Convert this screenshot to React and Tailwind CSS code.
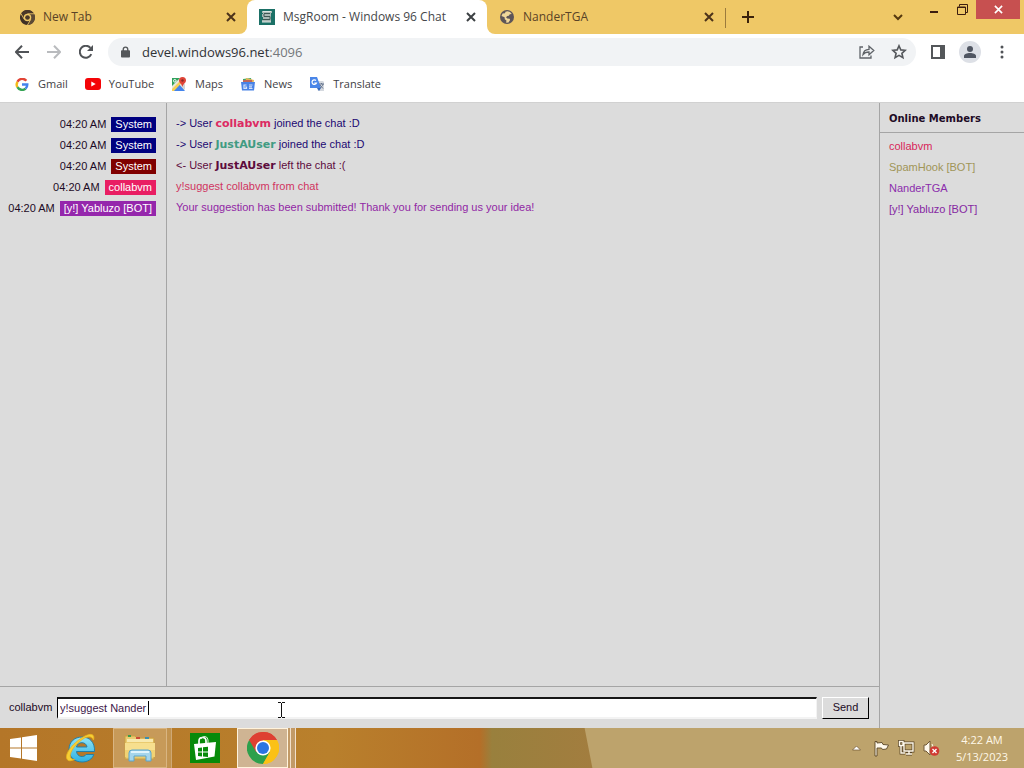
import React from "react";

const tabText = "text-[12px] leading-4";

function ChromeMark({ size, mono }) {
  const c = mono
    ? { r: "#4a3728", y: "#5d4a35", g: "#3f3026", b: "#4a3728", w: "#efc866" }
    : { r: "#de4032", y: "#fbc116", g: "#2da04c", b: "#2b74e2", w: "#ffffff" };
  return (
    <svg width={size} height={size} viewBox="0 0 32 32" aria-hidden="true">
      <path d="M16 16 2.14 8A16 16 0 0 1 29.86 8Z" fill={c.r} />
      <path d="M16 16V8H29.86A16 16 0 0 1 16 32Z" fill={c.y} />
      <path d="M2.14 8A16 16 0 0 0 16 32L22.9 20 16 16Z" fill={c.g} />
      <path d="M2.14 8 9.1 20 16 16 16 8 29.86 8A16 16 0 0 0 2.14 8Z" fill={c.r} />
      <path d="M29.86 8H16L22.9 20 16 32A16 16 0 0 0 29.86 8Z" fill={c.y} />
      {mono && (
        <g stroke={c.w} strokeWidth="1.8" fill="none">
          <path d="M16 8H31M9.1 20 1.6 7M22.9 20 15.4 33" />
        </g>
      )}
      <circle cx="16" cy="16" r={mono ? 8 : 7.6} fill={c.w} />
      <circle cx="16" cy="16" r={mono ? 5 : 6} fill={c.b} />
    </svg>
  );
}

function Cross({ color, size = 10, width = 2 }) {
  return (
    <svg width={size} height={size} viewBox="0 0 10 10" aria-hidden="true">
      <path d="M1 1 9 9M9 1 1 9" stroke={color} strokeWidth={width} />
    </svg>
  );
}

function MsgRoomIcon() {
  return (
    <svg width="16" height="16" viewBox="0 0 16 16" aria-hidden="true">
      <rect width="16" height="16" fill="#1b7066" />
      <path d="M3 2h10v2h-1v9H3v-2h1V8H3V5h1V4H3z" fill="#a9b8b4" />
      <path d="M5 4.500h6M5 5v2.500h6v3H4" stroke="#3f5753" fill="none" />
      <path d="M3 13h9M4 2.500h8" stroke="#dce5e2" />
    </svg>
  );
}

function GlobeIcon() {
  return (
    <svg width="16" height="16" viewBox="0 0 16 16" aria-hidden="true">
      <circle cx="8" cy="8" r="7" fill="#5d5558" />
      <path d="M8.500 2.200 11 3 12.800 5l-2 .2-1 1.600-1.500.2L7 8.300l1.300 1.200 2.300.3.500 1.300-1.600 2.400-2.300.3.200-2.200-1.600-1.300-.2-2L2.500 7.100 3.600 4.500 6 4.200l.5-1.400z" fill="#efd79a" />
    </svg>
  );
}

function Tab({ icon, title, active, width }) {
  return (
    <div
      role="tab"
      aria-selected={active}
      className={`flex h-[34px] min-w-0 items-center pl-3 pr-2 ${width} ${
        active ? "rounded-t-lg bg-white text-[#45474a]" : "text-[#5a4326]"
      }`}
    >
      {icon}
      <span className={`ml-2 flex-1 truncate ${tabText}`}>{title}</span>
      <button aria-label={`Close ${title}`} className="grid size-4 place-items-center">
        <Cross color={active ? "#3c4043" : "#4c331a"} />
      </button>
    </div>
  );
}

function TabStrip() {
  return (
    <header className="flex h-[34px] bg-[#efc866]">
      <div role="tablist" className="flex min-w-0">
        <div className="flex w-[247px] bg-white">
          <div className="flex w-full rounded-br-lg bg-[#efc866] pl-2">
            <Tab icon={<ChromeMark size={15} mono />} title="New Tab" width="w-full" />
          </div>
        </div>
        <div className="flex">
          <Tab icon={<MsgRoomIcon />} title="MsgRoom - Windows 96 Chat" active width="w-[240px]" />
        </div>
        <div className="w-[238px] bg-white">
          <div className="rounded-bl-lg bg-[#efc866]">
            <Tab icon={<GlobeIcon />} title="NanderTGA" width="w-full" />
          </div>
        </div>
      </div>
      <span className="mt-2 h-5 w-px bg-[#9b7b3d]" />
      <button aria-label="New tab" className="ml-4 mt-2 grid h-[18px] w-3 place-items-center">
        <svg width="12" height="12" viewBox="0 0 12 12"><path d="M6 0v12M0 6h12" stroke="#3b220b" strokeWidth="2" /></svg>
      </button>
      <span className="flex-1" />
      <div className="flex items-start">
        <button aria-label="Search tabs" className="mr-6 mt-2 grid h-[18px] w-3 place-items-center">
          <svg width="10" height="7" viewBox="0 0 10 7"><path d="m1 1 4 4 4-4" stroke="#55390f" strokeWidth="2" fill="none" /></svg>
        </button>
        <button aria-label="Minimize" className="mr-4 grid h-6 w-3 place-items-center">
          <svg width="8" height="2"><path d="M0 1h8" stroke="#3b1d10" strokeWidth="2" /></svg>
        </button>
        <button aria-label="Restore" className="mr-2 grid h-[18px] w-3 place-items-center">
          <svg width="11" height="11" viewBox="0 0 11 11" fill="none" stroke="#3b1d10">
            <path d="M2.500 2.500V.500h8v8h-2M.500 3h8v7.500h-8zM.500 3.500h8" />
          </svg>
        </button>
        <button aria-label="Close window" className="mr-1 grid h-[19px] w-[44px] place-items-center bg-[#c75050]">
          <Cross color="#fff" size={9} width={1.8} />
        </button>
      </div>
    </header>
  );
}

function Toolbar() {
  return (
    <div className="flex h-9 items-center bg-white pl-3 pr-3">
      <button aria-label="Back" className="grid size-5 place-items-center">
        <svg width="14" height="14" viewBox="0 0 14 14" fill="none" stroke="#505357" strokeWidth="2"><path d="M14 7H1.500M7 .8.900 7 7 13.200" /></svg>
      </button>
      <button aria-label="Forward" className="ml-3 grid size-5 place-items-center">
        <svg width="14" height="14" viewBox="0 0 14 14" fill="none" stroke="#b9bbbe" strokeWidth="2"><path d="M0 7h12.500M7 .8 13.100 7 7 13.200" /></svg>
      </button>
      <button aria-label="Reload" className="ml-3 grid size-5 place-items-center">
        <svg width="14" height="14" viewBox="0 0 14 14">
          <path d="M12.300 9.200A6 6 0 1 1 11.400 2.900" fill="none" stroke="#505357" strokeWidth="2" />
          <path d="M14 0v6H8z" fill="#505357" />
        </svg>
      </button>
      <div className="ml-3 flex h-7 flex-1 items-center rounded-full bg-[#f1f3f5] pl-[13px] pr-[7px]">
        <svg width="9" height="12" viewBox="0 0 10 12" aria-hidden="true">
          <rect y="4" width="10" height="8" rx="1" fill="#54575a" />
          <path d="M2.500 5V3a2.500 2.500 0 0 1 5 0v2" fill="none" stroke="#54575a" strokeWidth="1.500" />
        </svg>
        <span className="ml-3 flex-1 text-[13px] leading-5 text-[#303236]">
          devel.windows96.net<span className="text-[#74777b]">:4096</span>
        </span>
        <button aria-label="Share" className="grid size-5 place-items-center">
          <svg width="16" height="14" viewBox="0 0 16 14" fill="none" stroke="#5f6368" strokeWidth="1.300">
            <path d="M4 2H1v11h11v-2.500M4 9.500c.4-3.500 2.500-5 6-5.200V1.200L14.800 5.500 10 9.800V7C7.500 7 5.500 7.600 4 9.500Z" />
          </svg>
        </button>
        <button aria-label="Bookmark this tab" className="ml-3 grid size-5 place-items-center">
          <svg width="16" height="16" viewBox="0 0 16 16" fill="none" stroke="#55585c" strokeWidth="1.600">
            <path d="m8 1.800 1.800 4.100 4.400.4-3.300 3 1 4.400L8 11.400l-3.900 2.300 1-4.400-3.300-3 4.400-.4z" />
          </svg>
        </button>
      </div>
      <button aria-label="Side panel" className="ml-3 grid size-5 place-items-center">
        <svg width="14" height="14" viewBox="0 0 14 14"><rect x="1" y="1" width="12" height="12" fill="#fff" stroke="#54575a" strokeWidth="2" /><path d="M9 1h4v12H9z" fill="#54575a" /></svg>
      </button>
      <button aria-label="Profile" className="ml-[11px] grid size-[22px] place-items-center rounded-full bg-[#dde0e6]">
        <svg width="12" height="12" viewBox="0 0 12 12" fill="#505662"><circle cx="6" cy="3" r="3" /><path d="M0 12v-2c0-2 3-3 6-3s6 1 6 3v2z" /></svg>
      </button>
      <button aria-label="Menu" className="ml-[11px] grid size-5 place-items-center">
        <svg width="4" height="14" viewBox="0 0 4 14" fill="#505357"><circle cx="2" cy="2" r="1.500" /><circle cx="2" cy="7" r="1.500" /><circle cx="2" cy="12" r="1.500" /></svg>
      </button>
    </div>
  );
}

const bookmarkIcons = {
  Gmail: (
    <svg width="16" height="13" viewBox="0 0 16 16" aria-hidden="true">
      <g fill="none" strokeWidth="3">
        <path d="M13.300 3.500A6.500 6.500 0 0 0 2.400 4.700" stroke="#e24436" />
        <path d="M2.400 4.700a6.500 6.500 0 0 0 0 6.600" stroke="#f4bb18" />
        <path d="M2.400 11.300a6.500 6.500 0 0 0 10 1.700" stroke="#36a455" />
        <path d="M12.400 13a6.500 6.500 0 0 0 2.100-5H8" stroke="#4482ec" />
      </g>
    </svg>
  ),
  YouTube: (
    <svg width="16" height="12" viewBox="0 0 16 12" aria-hidden="true"><rect width="16" height="12" rx="3" fill="#f40407" /><path d="m6.300 3.500 4.400 2.500-4.400 2.500z" fill="#fff" /></svg>
  ),
  Maps: (
    <svg width="16" height="16" viewBox="0 0 16 16" aria-hidden="true">
      <path d="M1 2h12v12H1z" fill="#e8e6dc" />
      <path d="M1 2h8L1 10z" fill="#31a15c" /><path d="M2 15 8 8l6 7z" fill="#4384ec" />
      <path d="m1 13 9-9 1.500 2L3 15H1z" fill="#f6cf55" />
      <path d="m9 9 5-1v6z" fill="#d3d5d6" />
      <path d="M11.500 1A3.500 3.500 0 0 1 15 4.500C15 7 12 8 11.500 11 11 8 8 7 8 4.500A3.500 3.500 0 0 1 11.500 1z" fill="#df4438" /><circle cx="11.500" cy="4.500" r="1.200" fill="#872c27" />
      <circle cx="3.800" cy="4.800" r="1.300" fill="none" stroke="#fff" />
    </svg>
  ),
  News: (
    <svg width="16" height="16" viewBox="0 0 16 16" aria-hidden="true">
      <path d="m3 3 8-1 1 6H3z" fill="#40a763" /><path d="m6 2 8 2-1 5H5z" fill="#e3b454" /><path d="M3 4h9v5H3z" fill="#bd675c" />
      <path d="M1 6h14l-1 8.500H2z" fill="#4a83e6" />
      <path d="M6.500 9H4v3.500h2.500V11H5M9 9h3.500M9 10.800h3M9 12.500h3.500" fill="none" stroke="#d6e4fb" strokeWidth="1.200" />
    </svg>
  ),
  Translate: (
    <svg width="16" height="16" viewBox="0 0 16 16" aria-hidden="true">
      <path d="M6 5h8l1 1v9H9z" fill="#d5d9df" />
      <path d="M1 1h7l4 11H1z" fill="#4a86e8" /><path d="m8 12 4 0-2 3z" fill="#3568bd" />
      <path d="M7 4.500A2.300 2.300 0 1 0 7.500 7H5.300" fill="none" stroke="#fff" strokeWidth="1.200" />
      <path d="M10 8h5M12.500 7v1M14 8c-.3 2-1.500 3-3 4M11 9l3 3.500" stroke="#66758e" fill="none" />
    </svg>
  ),
};

function Bookmarks() {
  return (
    <nav className="flex h-8 items-center gap-[17px] bg-white px-[14px] pb-1 text-[11px] leading-4 text-[#3f4145]">
      {Object.keys(bookmarkIcons).map((name) => (
        <a key={name} href="#" className="flex items-center gap-2">{bookmarkIcons[name]}{name}</a>
      ))}
    </nav>
  );
}

const messages = [
  { who: "System", tag: "bg-[#000080]", text: "text-[#1b0872]", body: <>-&gt; User <b className="text-[#dc2a62]">collabvm</b> joined the chat :D</> },
  { who: "System", tag: "bg-[#000080]", text: "text-[#1b0872]", body: <>-&gt; User <b className="text-[#419b82]">JustAUser</b> joined the chat :D</> },
  { who: "System", tag: "bg-[#800000]", text: "text-[#5d0b3c]", body: <>&lt;- User <b>JustAUser</b> left the chat :(</> },
  { who: "collabvm", tag: "bg-[#e91e63]", text: "text-[#d03460]", body: "y!suggest collabvm from chat" },
  { who: "[y!] Yabluzo [BOT]", tag: "bg-[#9527ac]", text: "text-[#9127a5]", body: "Your suggestion has been submitted! Thank you for sending us your idea!" },
];

const members = [
  { name: "collabvm", color: "text-[#d82659]" },
  { name: "SpamHook [BOT]", color: "text-[#a09558]" },
  { name: "NanderTGA", color: "text-[#8b2dac]" },
  { name: "[y!] Yabluzo [BOT]", color: "text-[#8627a2]" },
];

function ChatRoom() {
  return (
    <main className="flex flex-1 border-t border-[#d1d1d1] bg-[#dcdcdc] font-['Liberation_Sans',Arial,sans-serif] text-[11px] leading-[15px] text-[#1d0b25]">
      <section className="flex min-w-0 flex-1 flex-col">
        <ol className="flex flex-1 flex-col">
          <li aria-hidden="true" className="h-[11px] w-[167px] border-r border-[#a5a5a5]" />
          {messages.map((m, i) => (
            <li key={i} className="flex h-[21px]">
              <div className="flex w-[167px] shrink-0 items-center justify-end gap-[5px] whitespace-nowrap border-r border-[#a5a5a5] pr-[10px]">
                <time>04:20 AM</time>
                <span className={`px-1 text-white ${m.tag}`}>{m.who}</span>
              </div>
              <p className={`flex-1 pl-[9px] pt-[2px] [&_b]:font-['DejaVu_Sans',sans-serif] ${m.text}`}>{m.body}</p>
            </li>
          ))}
          <li aria-hidden="true" className="w-[167px] flex-1 border-r border-[#a5a5a5]" />
        </ol>
        <form className="flex h-[42px] items-center border-t border-[#a5a5a5] pl-[9px] pr-[10px]" onSubmit={(e) => e.preventDefault()}>
          <label htmlFor="message" className="w-12 shrink-0">collabvm</label>
          <div className="relative flex-1">
            <input
              id="message"
              defaultValue="y!suggest Nander"
              className="block h-[22px] w-full border border-b-2 border-t-2 border-b-[#f3f3f3] border-l-black border-r-[#f3f3f3] border-t-[#161616] bg-white px-[2px] text-[#3c1548] outline-none"
            />
            <span className="absolute left-[91px] top-1 h-[14px] w-px bg-black" />
            <svg className="absolute left-[220px] top-[5px]" width="9" height="16" viewBox="0 0 9 16" fill="none" stroke="#111" aria-hidden="true">
              <path d="M1 .500h3M5 .500h3M4.500 1v14M1 15.500h3M5 15.500h3" />
            </svg>
          </div>
          <button className="ml-[5px] h-[22px] w-[47px] border border-b-black border-l-white border-r-black border-t-white bg-[#dcdcdc]">Send</button>
        </form>
      </section>
      <aside className="w-[145px] shrink-0 border-l border-[#a5a5a5]">
        <h2 className="h-[30px] border-b border-[#a5a5a5] pl-[9px] pt-2 font-['DejaVu_Sans',sans-serif] text-[10px] font-bold">Online Members</h2>
        <ul className="pl-[9px] pt-[3px]">
          {members.map((m) => (
            <li key={m.name} className={`flex h-[21px] items-center ${m.color}`}>{m.name}</li>
          ))}
        </ul>
      </aside>
    </main>
  );
}

function ExplorerWindowIcon() {
  return (
    <svg width="32" height="30" viewBox="0 0 32 30" aria-hidden="true">
      <path d="M1 3h10l2 2h17v21H1z" fill="#eacb70" stroke="#c99f42" />
      <path d="M3 6h26v3H3z" fill="#f8e9ae" /><path d="M1 10h30v14H1z" fill="#f7df8e" />
      <path d="M1 17h30v7H1z" fill="#f1d273" />
      <path d="M4 2h3v2H4z" fill="#3b9b4a" /><path d="M12 4h4v2h-4z" fill="#cc4b37" /><path d="M21 4h4v2h-4z" fill="#3c8eaf" />
      <path d="M5 28v-8q0-3 3-3h16q3 0 3 3v8h-5v-5H10v5z" fill="#a5d5ec" stroke="#5aa4cb" />
      <path d="M7 19h18" stroke="#e0f4fc" strokeWidth="2" />
    </svg>
  );
}

function Taskbar() {
  return (
    <footer className="flex h-10 items-stretch bg-[linear-gradient(79deg,transparent_581px,#bda36c_582px),linear-gradient(90deg,#b47628_0px,#b9802c_330px,#b46f28_480px,#99803d_492px,#a37d3f_600px)] text-[#fff8e8]">
      <button aria-label="Start" className="grid w-12 place-items-center">
        <svg width="28" height="26" viewBox="0 0 28 26" fill="#fff"><path d="M0 4 11 2.400V12.400H0zM12 2.200 27 0v12.400H12zM0 13.500h11v10L0 22zM12 13.500h15V26l-15-2.300z" /></svg>
      </button>
      <button aria-label="Internet Explorer" className="grid w-[65px] place-items-center">
        <svg width="31" height="32" viewBox="0 0 31 32">
          <defs><linearGradient id="ie" x2="0" y2="1"><stop stopColor="#8fe3f8" /><stop offset="1" stopColor="#2fb2e2" /></linearGradient></defs>
          <path d="M29.500 19.500H11.500c.5 5.500 7.500 6.500 9.500 3h7.800C27 27.500 22.500 30 17 30 9.500 30 4 25 4 17.500S9.500 5 17 5s13 5 12.500 14.500zM22 15c-.5-5.500-9.500-6-10.500 0z" fill="url(#ie)" stroke="#247fa6" />
          <path d="M28.500 8C30 3 27 .5 20 4 9 9.500-1 22 2 27c1 2.500 4 2 7.500.5C3 28 4 20 12 12 19 5 26 2 28.500 8Z" fill="#f7cf35" stroke="#e9b21d" strokeWidth=".8" />
        </svg>
      </button>
      <div className="flex w-[59px] border-r border-[#cfa875] bg-[#c2934f]">
        <button aria-label="File Explorer" className="grid flex-1 place-items-center border border-[#d9b582] bg-[#c79a59]"><ExplorerWindowIcon /></button>
        <span className="w-1" />
      </div>
      <button aria-label="Store" className="grid w-[65px] place-items-center">
        <svg width="30" height="30" viewBox="0 0 30 30">
          <path d="M0 0h30v30H0z" fill="#078a0a" />
          <path d="M9 11V8q0-3.500 3.500-3.500T16 8v2" fill="none" stroke="#fff" strokeWidth="1.700" /><path d="M11 6q1-3 4-2.500T18 7v3" stroke="#d9f0d6" fill="none" />
          <path d="m4 11 22-2-1.500 14.500L6 27z" fill="#fff" />
          <path d="m8 15 4-.5v4H8zM13 14.300l5-.6v4.800h-5zM8 19.500h4v4l-4-.6zM13 19.500h5V24l-5-.500z" fill="#078a0a" />
        </svg>
      </button>
      <div className="flex w-[59px] gap-px border-r border-[#f1dfcb] bg-[#c29a67]">
        <button aria-label="Google Chrome" className="grid flex-1 place-items-center border border-[#fff3dc] bg-[#cfb493]"><ChromeMark size={32} /></button>
        <span className="w-[2px] border-r border-[#f1dfcb]" />
        <span className="w-[3px]" />
      </div>
      <span className="flex-1" />
      <div className="flex items-center">
        <button aria-label="Show hidden icons"><svg width="9" height="6" viewBox="0 0 9 6"><path d="M.500 5 4.500 1l4 4z" fill="#fff" stroke="#6c512f" strokeWidth=".7" /></svg></button>
        <svg className="ml-3" width="17" height="17" viewBox="0 0 17 17" role="img" aria-label="Action Center">
          <path d="M2 1.500h2V3l5-.5 1 2 5.500.5-2 4-4 .5-1-1.500H4v8H2z" fill="#fff9ec" stroke="#594526" strokeWidth=".9" />
        </svg>
        <svg className="ml-2" width="17" height="16" viewBox="0 0 17 16" role="img" aria-label="Network">
          <g fill="none" stroke="#594526" strokeWidth="2.800"><path d="M6 3h9v8H6zM8 14h6M11 11v3M3 5v8h4M1.500 1.500h3.500v4H1.500z" /></g>
          <g fill="none" stroke="#fff9ec" strokeWidth="1.400"><path d="M6 3h9v8H6zM8 14h6M11 11v3M3 5v8h4M1.500 1.500h3.500v4H1.500z" /></g>
        </svg>
        <svg className="ml-2" width="17" height="16" viewBox="0 0 17 16" role="img" aria-label="Volume muted">
          <path d="M1 5h2l4-4v14l-4-4H1z" fill="#fff9ec" stroke="#705936" />
          <path d="M9 4q2 2 0 6" fill="none" stroke="#fff9ec" />
          <circle cx="11.500" cy="11" r="4.800" fill="#d03a32" /><path d="m9.500 9 4 4m0-4-4 4" stroke="#fff" strokeWidth="1.300" />
        </svg>
        <div className="ml-3 mr-3 flex w-[60px] flex-col items-center whitespace-nowrap text-[11px] leading-[17px]">
          <time>4:22 AM</time>
          <time>5/13/2023</time>
        </div>
      </div>
    </footer>
  );
}

export default function App() {
  return (
    <div className="flex min-h-screen flex-col font-['Open_Sans','Noto_Sans',sans-serif]">
      <TabStrip />
      <Toolbar />
      <Bookmarks />
      <ChatRoom />
      <Taskbar />
    </div>
  );
}
